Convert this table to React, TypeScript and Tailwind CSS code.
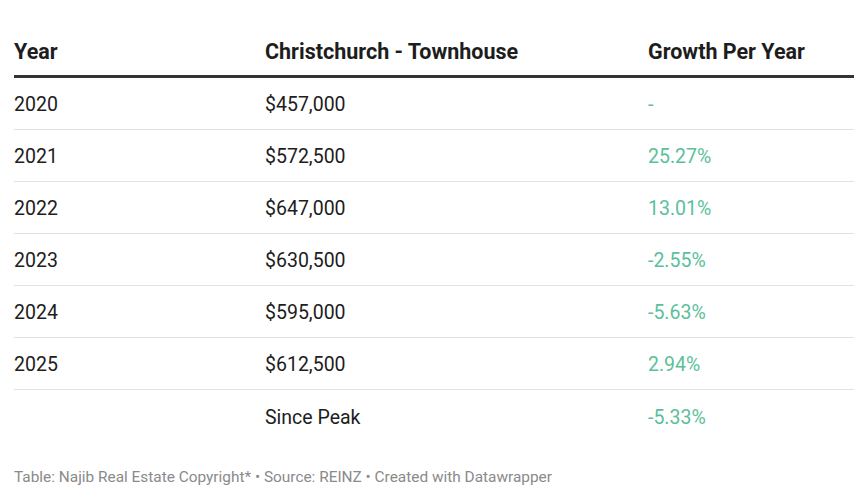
const rows = [
  { year: "2020", price: "$457,000", growth: "-" },
  { year: "2021", price: "$572,500", growth: "25.27%" },
  { year: "2022", price: "$647,000", growth: "13.01%" },
  { year: "2023", price: "$630,500", growth: "-2.55%" },
  { year: "2024", price: "$595,000", growth: "-5.63%" },
  { year: "2025", price: "$612,500", growth: "2.94%" },
  { year: "", price: "Since Peak", growth: "-5.33%" },
];

export default function App() {
  return (
    <div className="w-[868px] h-[500px] bg-white px-[14px] pt-[39px] font-['Roboto',sans-serif] text-[#1d1d1d]">
      <div className="w-[840px]">
        <div className="flex items-center pb-[10px] border-b-[3px] border-[#333333] text-[21.5px] leading-[26px] font-bold">
          <div className="w-[251px]">Year</div>
          <div className="w-[383px]">Christchurch - Townhouse</div>
          <div className="flex-1">Growth Per Year</div>
        </div>
        {rows.map((r, i) => (
          <div
            key={i}
            className={`flex items-center h-[52px] pt-[3px] text-[19.5px] ${
              i < rows.length - 1 ? "border-b border-[#e3e3e3]" : ""
            }`}
          >
            <div className="w-[251px]">{r.year}</div>
            <div className="w-[383px]">{r.price}</div>
            <div className="flex-1 text-[#5cbf9b]">{r.growth}</div>
          </div>
        ))}
      </div>
      <div className="mt-[25px] text-[15.4px] leading-[20px] text-[#8a8a8a]">
        Table: Najib Real Estate Copyright* • Source: REINZ • Created with Datawrapper
      </div>
    </div>
  );
}
